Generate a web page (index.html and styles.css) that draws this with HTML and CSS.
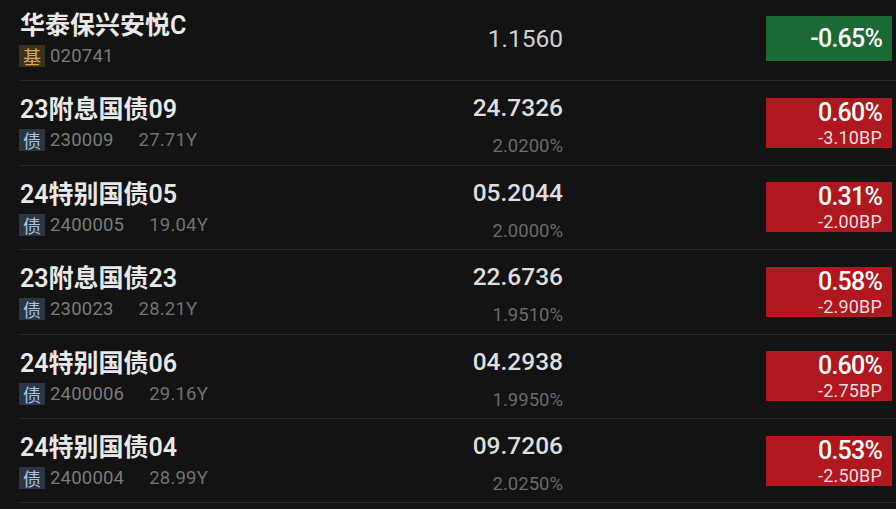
FILE: index.html
```html
<!DOCTYPE html>
<html lang="zh-CN">
<head>
<meta charset="utf-8">
<title>行情列表</title>
<link rel="stylesheet" href="styles.css">
</head>
<body>
<div class="list">
  <div class="row">
    <div class="name-col">
      <div class="title">华泰保兴安悦C</div>
      <div class="meta"><span class="tag tag-fund">基</span><span class="code">020741</span></div>
    </div>
    <div class="price-col">
      <div class="price price-fund">1.1560</div>
    </div>
    <div class="chg chg-down"><div class="pct">-0.65%</div></div>
  </div>

  <div class="row">
    <div class="name-col">
      <div class="title">23附息国债09</div>
      <div class="meta"><span class="tag tag-bond">债</span><span class="code">230009</span><span class="term">27.71Y</span></div>
    </div>
    <div class="price-col">
      <div class="price">24.7326</div>
      <div class="yield">2.0200%</div>
    </div>
    <div class="chg chg-up"><div class="pct">0.60%</div><div class="bp">-3.10BP</div></div>
  </div>

  <div class="row">
    <div class="name-col">
      <div class="title">24特别国债05</div>
      <div class="meta"><span class="tag tag-bond">债</span><span class="code">2400005</span><span class="term">19.04Y</span></div>
    </div>
    <div class="price-col">
      <div class="price">05.2044</div>
      <div class="yield">2.0000%</div>
    </div>
    <div class="chg chg-up"><div class="pct">0.31%</div><div class="bp">-2.00BP</div></div>
  </div>

  <div class="row">
    <div class="name-col">
      <div class="title">23附息国债23</div>
      <div class="meta"><span class="tag tag-bond">债</span><span class="code">230023</span><span class="term">28.21Y</span></div>
    </div>
    <div class="price-col">
      <div class="price">22.6736</div>
      <div class="yield">1.9510%</div>
    </div>
    <div class="chg chg-up"><div class="pct">0.58%</div><div class="bp">-2.90BP</div></div>
  </div>

  <div class="row">
    <div class="name-col">
      <div class="title">24特别国债06</div>
      <div class="meta"><span class="tag tag-bond">债</span><span class="code">2400006</span><span class="term">29.16Y</span></div>
    </div>
    <div class="price-col">
      <div class="price">04.2938</div>
      <div class="yield">1.9950%</div>
    </div>
    <div class="chg chg-up"><div class="pct">0.60%</div><div class="bp">-2.75BP</div></div>
  </div>

  <div class="row">
    <div class="name-col">
      <div class="title">24特别国债04</div>
      <div class="meta"><span class="tag tag-bond">债</span><span class="code">2400004</span><span class="term">28.99Y</span></div>
    </div>
    <div class="price-col">
      <div class="price">09.7206</div>
      <div class="yield">2.0250%</div>
    </div>
    <div class="chg chg-up"><div class="pct">0.53%</div><div class="bp">-2.50BP</div></div>
  </div>
</div>
</body>
</html>
```

FILE: styles.css
```css
html, body {
  margin: 0;
  padding: 0;
  background: #131313;
  overflow: hidden;
}

body {
  font-family: Roboto, "Noto Sans CJK SC", sans-serif;
  color: #e4e4e4;
}

.list {
  margin-top: -3px;
}

.row {
  display: flex;
  align-items: center;
  height: 83.4px;
  margin-left: 20px;
  padding-right: 4px;
  border-bottom: 1px solid #2a2a2a;
}

.name-col {
  flex: 1;
  display: flex;
  flex-direction: column;
  align-self: flex-start;
  padding-top: 14px;
}

.title {
  font-size: 25px;
  line-height: 30px;
  font-weight: 600;
  color: #e8e8e8;
  white-space: nowrap;
}

.meta {
  display: flex;
  align-items: center;
  height: 30px;
  font-size: 18.5px;
  color: #777;
}

.tag {
  display: inline-flex;
  align-items: center;
  justify-content: center;
  width: 26px;
  height: 22px;
  font-family: "Noto Sans CJK SC", sans-serif;
  font-size: 18px;
  margin-right: 5px;
  margin-left: -1px;
}

.tag-fund {
  background: #3a321f;
  color: #d2ac4e;
}

.tag-bond {
  background: #2a3646;
  color: #a9c2df;
}

.code {
  color: #7a7a7a;
  letter-spacing: 0.2px;
}

.term {
  margin-left: 25px;
  color: #717171;
  letter-spacing: 0.2px;
}

.price-col {
  width: 160px;
  display: flex;
  flex-direction: column;
  align-items: flex-end;
  align-self: flex-start;
  padding-top: 12px;
}

.price {
  font-size: 24.5px;
  line-height: 30px;
  font-weight: 500;
  color: #dedede;
}

.price-fund {
  font-weight: 400;
  color: #cfcfcf;
  margin-top: 15px;
}

.yield {
  font-size: 18.5px;
  line-height: 26px;
  margin-top: 10px;
  color: #6a6a6a;
}

.chg {
  margin-left: 203px;
  width: 126px;
  box-sizing: border-box;
  padding-right: 10px;
  display: flex;
  flex-direction: column;
  align-items: flex-end;
  justify-content: center;
  color: #fff;
}

.chg-down {
  background: #1b6a35;
  height: 45px;
}

.chg-up {
  background: #b0171f;
  height: 50px;
}

.pct {
  font-size: 25px;
  line-height: 29px;
  font-weight: 500;
  letter-spacing: -0.8px;
}

.bp {
  font-size: 18px;
  line-height: 21px;
  color: #f4dede;
  letter-spacing: 0.2px;
}
```
